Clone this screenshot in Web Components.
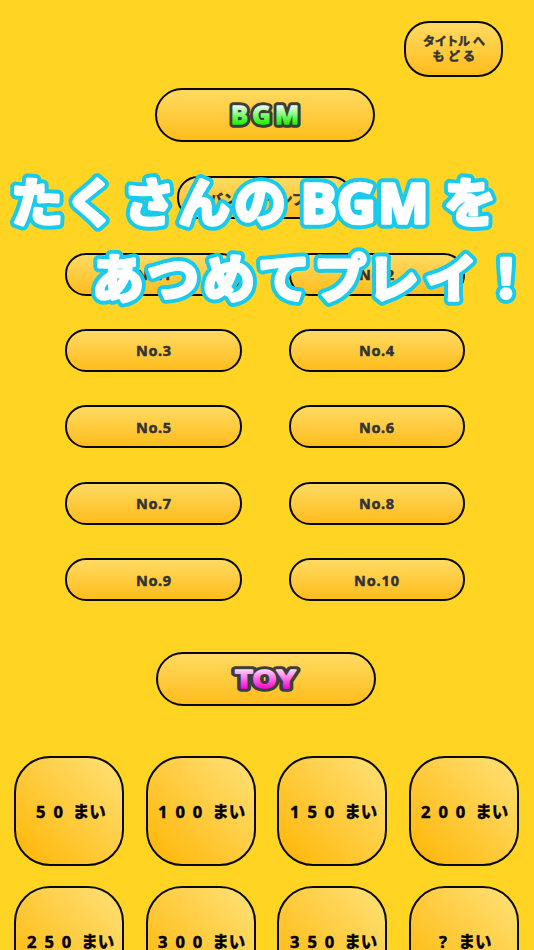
<!DOCTYPE html>
<html lang="ja">
<head>
<meta charset="utf-8">
<title>BGM / TOY</title>
<style>
  html, body {
    margin: 0;
    height: 950px;
    overflow: hidden;
    background: #ffd422;
  }
</style>
</head>
<body>
<sound-room></sound-room>

<script>
//Rounded button, the label goes in the slot
//
let buttonTmpl = document.createElement('template');
buttonTmpl.innerHTML = `
  <style>
    :host {
      box-sizing: border-box;
      display: flex;
      align-items: center;
      justify-content: center;
      width: 176.5px;
      height: 43px;
      border: 2px solid #080804;
      border-radius: 21px;
      background: linear-gradient(#ffda62, #ffbd1c);
      color: #333;
    }

    :host([kind="header"]) {
      width: 220px;
      height: 54px;
      border-radius: 27px;
    }

    :host([kind="back"]) {
      width: 99px;
      height: 56px;
      border-radius: 25px;
    }

    :host([kind="coin"]) {
      width: 110px;
      height: 110px;
      border-radius: 36px;
      background: linear-gradient(45deg, #ffbb12 12%, #ffdc6a 88%);
      color: #000;
    }
  </style>
  <slot></slot>
`;

class PopButton extends HTMLElement {
  constructor() {
    super();
    this.attachShadow({mode: 'open'}).appendChild(buttonTmpl.content.cloneNode(true));
  }
}
customElements.define('pop-button', PopButton);

//Bold label, drawn in an svg so its width and weight can be set
//attributes: width, height, size, lines ("text:x:y:length" joined with "|")
//
class PopLabel extends HTMLElement {
  constructor() {
    super();
    this.attachShadow({mode: 'open'});
  }

  connectedCallback() {
    const width = this.getAttribute('width');
    const height = this.getAttribute('height');
    const lines = this.getAttribute('lines').split('|').map(line => {
      const [text, x, y, length] = line.split(':');
      return `<text x="${x}" y="${y}" ${length ? `textLength="${length}"` : ''}>${text}</text>`;
    }).join('');

    this.shadowRoot.innerHTML = `
      <style>
        :host { display: block; }
        svg { display: block; overflow: visible; }
        text {
          font: 700 ${this.getAttribute('size')}px "Noto Sans", "Noto Sans CJK JP", sans-serif;
          fill: currentColor;
          stroke: currentColor;
          stroke-width: .5px;
          stroke-linejoin: round;
          white-space: pre;
        }
      </style>
      <svg width="${width}" height="${height}">${lines}</svg>
    `;
  }
}
customElements.define('pop-label', PopLabel);

//Outlined section title with a vertical gradient
//
class PopTitle extends HTMLElement {
  constructor() {
    super();
    this.attachShadow({mode: 'open'});
  }

  connectedCallback() {
    const text = this.getAttribute('value');
    const place = `x="${this.getAttribute('x')}" y="22.5"`;
    this.shadowRoot.innerHTML = `
      <style>
        :host { display: block; }
        svg { display: block; overflow: visible; }
        text {
          font: 700 25.5px "Noto Sans", sans-serif;
          stroke: #3d3d3d;
          stroke-width: 7.5px;
          stroke-linejoin: round;
        }
        .front { fill: url(#fill); stroke: url(#fill); stroke-width: 1.4px; }
      </style>
      <svg width="72" height="28">
        <defs>
          <linearGradient id="fill" gradientUnits="userSpaceOnUse" x1="0" y1="3" x2="0" y2="23">
            <stop offset="0" stop-color="${this.getAttribute('top')}"/>
            <stop offset="1" stop-color="${this.getAttribute('tone')}"/>
          </linearGradient>
        </defs>
        <text ${place} textLength="${this.getAttribute('length')}" lengthAdjust="${this.getAttribute('adjust')}">${text}</text>
        <text class="front" aria-hidden="true" ${place} textLength="${this.getAttribute('length')}" lengthAdjust="${this.getAttribute('adjust')}">${text}</text>
      </svg>
    `;
  }
}
customElements.define('pop-title', PopTitle);

//Big caption lying over the buttons
//
class PromoCaption extends HTMLElement {
  constructor() {
    super();
    this.attachShadow({mode: 'open'});
  }

  connectedCallback() {
    const lines = `
      <text y="222" x="11 65 123 178 234">たくさんの</text>
      <text class="latin" y="223" x="301 337 378">BGM</text>
      <text y="222" x="444">を</text>
      <text y="298" x="92 147 203 258 314 367 425 480">あつめてプレイ！</text>
    `;
    this.shadowRoot.innerHTML = `
      <style>
        :host { display: block; }
        svg { display: block; }
        text { font: 700 52px "Noto Sans CJK JP", sans-serif; }
        .latin { font: 700 53.5px "Noto Sans", sans-serif; }
        g { stroke-linejoin: round; stroke-linecap: round; }
        .back { fill: #18caeb; stroke: #18caeb; stroke-width: 11.5px; }
        .front { fill: #fff; stroke: #fff; stroke-width: 3.6px; }
      </style>
      <svg width="534" height="330">
        <g class="back">${lines}</g>
        <g class="front" aria-hidden="true">${lines}</g>
      </svg>
    `;
  }
}
customElements.define('promo-caption', PromoCaption);

//Whole screen
//
class SoundRoom extends HTMLElement {
  constructor() {
    super();
    this.attachShadow({mode: 'open'});
  }

  connectedCallback() {
    const tracks = [1, 2, 3, 4, 5, 6, 7, 8, 9, 10].map(n => {
      const w = n > 9 ? 45 : 35;
      return `<pop-button><pop-label width="${w}" height="16" size="14.5" lines="No.${n}:0:13.5:${w}"></pop-label></pop-button>`;
    }).join('');

    const coins = ['50', '100', '150', '200', '250', '300', '350', '?'].map(n => {
      // one cell per digit, then the counter word
      const cell = 17.4;
      const w = 34.5 + n.length * cell;
      const digits = n.split('').map((d, i) => `${d}:${i * cell + 1}:16:`).join('|');
      return `<pop-button kind="coin"><pop-label width="${w}" height="18" size="16.5" lines="${digits}|まい:${w - 31.5}:16:33"></pop-label></pop-button>`;
    }).join('');

    this.shadowRoot.innerHTML = `
      <style>
        :host {
          display: flex;
          flex-direction: column;
          align-items: center;
          position: relative;
          box-sizing: border-box;
          height: 950px;
          padding-top: 21px;
          overflow: hidden;
        }
        pop-button { flex: none; }
        .back { align-self: flex-end; margin-right: 31px; }
        .bgm { margin: 11px 4px 0 0; }
        .band { margin: 34px 4px 0 0; }
        .tracks {
          display: grid;
          grid-template-columns: 176.5px 176.5px;
          gap: 33.4px 47px;
          margin: 33.5px 4px 0 0;
        }
        .toy { margin: 50.8px 2px 0 0; }
        .coins {
          display: grid;
          grid-template-columns: repeat(4, 110px);
          gap: 19.7px 21.4px;
          margin: 50.2px 1px 0 0;
        }
        promo-caption { position: absolute; left: 0; top: 0; }
      </style>
      <pop-button class="back" kind="back">
        <pop-label width="62" height="30" size="12" lines="タイトル:0:11.5:47|へ:50:11.5:|も:9.5:26.5:|ど:25:26.5:|る:40:26.5:"></pop-label>
      </pop-button>
      <pop-button class="bgm" kind="header"><pop-title value="BGM" top="#fff" tone="#19f500" x="2" length="68" adjust="spacing"></pop-title></pop-button>
      <pop-button class="band">
        <pop-label width="112" height="18" size="14" lines="バンドジャンプ:0:14.5:97"></pop-label>
      </pop-button>
      <div class="tracks">${tracks}</div>
      <pop-button class="toy" kind="header"><pop-title value="TOY" top="#ffe6fb" tone="#ff08d0" x="5" length="61" adjust="spacingAndGlyphs"></pop-title></pop-button>
      <div class="coins">${coins}</div>
      <promo-caption></promo-caption>
    `;
  }
}
customElements.define('sound-room', SoundRoom);
</script>
</body>
</html>
